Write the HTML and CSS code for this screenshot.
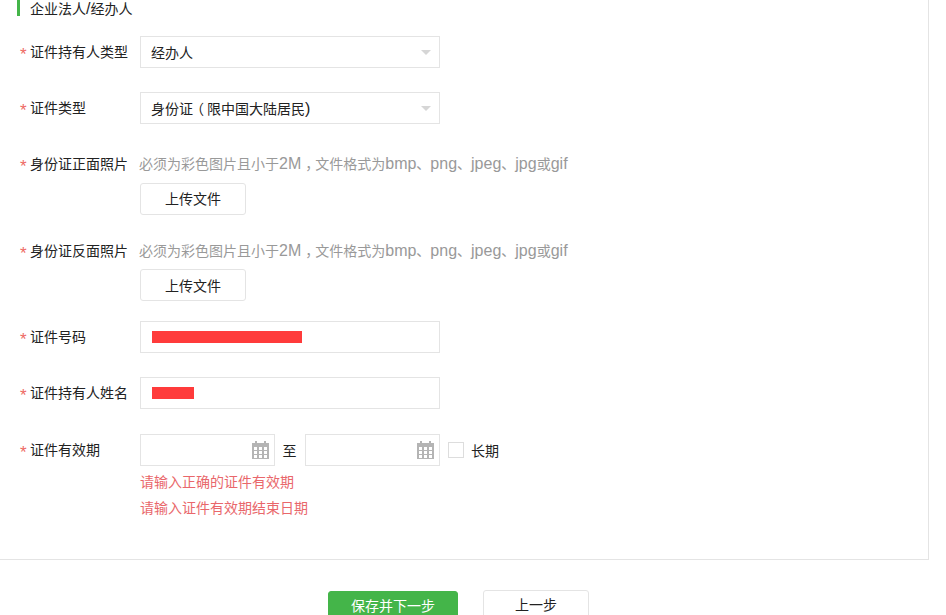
FILE: index.html
```html
<!DOCTYPE html>
<html lang="zh-CN">
<head>
<meta charset="utf-8">
<title>企业法人/经办人</title>
<link rel="stylesheet" href="styles.css">
</head>
<body>
<main class="panel">
  <h2 class="section-title">企业法人<span class="latin">/</span>经办人</h2>

  <div class="row row-first">
    <label class="label"><span class="star">*</span>证件持有人类型</label>
    <div class="field select"><span>经办人</span><i class="caret"></i></div>
  </div>

  <div class="row">
    <label class="label"><span class="star">*</span>证件类型</label>
    <div class="field select"><span>身份证<span class="fw-paren">（</span>限中国大陆居民<span class="latin">)</span></span><i class="caret"></i></div>
  </div>

  <div class="row">
    <label class="label"><span class="star">*</span>身份证正面照片</label>
    <div class="stack">
      <p class="hint">必须为彩色图片且小于<span class="latin">2M</span><span class="fw-comma">，</span>文件格式为<span class="latin">bmp</span>、<span class="latin">png</span>、<span class="latin">jpeg</span>、<span class="latin">jpg</span>或<span class="latin">gif</span></p>
      <button class="upload" type="button">上传文件</button>
    </div>
  </div>

  <div class="row row-tight">
    <label class="label"><span class="star">*</span>身份证反面照片</label>
    <div class="stack">
      <p class="hint">必须为彩色图片且小于<span class="latin">2M</span><span class="fw-comma">，</span>文件格式为<span class="latin">bmp</span>、<span class="latin">png</span>、<span class="latin">jpeg</span>、<span class="latin">jpg</span>或<span class="latin">gif</span></p>
      <button class="upload upload-tight" type="button">上传文件</button>
    </div>
  </div>

  <div class="row row-id">
    <label class="label"><span class="star">*</span>证件号码</label>
    <div class="field"><b class="redact redact-long"></b></div>
  </div>

  <div class="row">
    <label class="label"><span class="star">*</span>证件持有人姓名</label>
    <div class="field"><b class="redact redact-short"></b></div>
  </div>

  <div class="row row-date">
    <label class="label"><span class="star">*</span>证件有效期</label>
    <div class="stack">
      <div class="dates">
        <div class="field date">
          <svg class="cal" viewBox="0 0 17 18" aria-hidden="true"><path d="M0 2h3V0h2v2h7V0h2v2h3v16H0z" fill="#b4b4b4"/><path d="M2 6h3v3H2zM7 6h3v3H7zM12 6h3v3h-3zM2 10h3v3H2zM7 10h3v3H7zM12 10h3v3h-3zM2 14h3v3H2zM7 14h3v3H7zM12 14h3v3h-3z" fill="#fff"/></svg>
        </div>
        <span class="to">至</span>
        <div class="field date">
          <svg class="cal" viewBox="0 0 17 18" aria-hidden="true"><path d="M0 2h3V0h2v2h7V0h2v2h3v16H0z" fill="#b4b4b4"/><path d="M2 6h3v3H2zM7 6h3v3H7zM12 6h3v3h-3zM2 10h3v3H2zM7 10h3v3H7zM12 10h3v3h-3zM2 14h3v3H2zM7 14h3v3H7zM12 14h3v3h-3z" fill="#fff"/></svg>
        </div>
        <span class="check"></span>
        <span class="long">长期</span>
      </div>
      <p class="error error-first">请输入正确的证件有效期</p>
      <p class="error">请输入证件有效期结束日期</p>
    </div>
  </div>
</main>

<footer class="actions">
  <button class="btn btn-primary" type="button">保存并下一步</button>
  <button class="btn btn-plain" type="button">上一步</button>
</footer>
</body>
</html>
```
FILE: styles.css
```css
* { box-sizing: border-box; }
html, body { margin: 0; height: 100%; overflow: hidden; background: #fff; }
body {
  font-family: "Liberation Sans", "Noto Sans CJK SC", sans-serif;
  font-size: 14px;
  color: #222;
}
.panel {
  width: 929px;
  height: 560px;
  border-right: 1px solid #e4e4e4;
  border-bottom: 1px solid #e4e4e4;
}
.section-title {
  margin: 0 0 0 17px;
  height: 16px;
  padding-left: 10px;
  border-left: 3px solid #44b549;
  font-size: 14px;
  font-weight: 400;
  line-height: 18px;
  white-space: nowrap;
}
.row { display: flex; margin-top: 24px; }
.row-first { margin-top: 20px; }
.row-tight { margin-top: 20px; }
.row-id { margin-top: 20px; }
.row-date { margin-top: 25px; }
.label {
  width: 140px;
  height: 32px;
  flex: none;
  padding-left: 20px;
  line-height: 32px;
  white-space: nowrap;
  display: flex;
}
.star { width: 10px; height: 32px; flex: none; padding-top: 3px; color: #ee6a64; font-size: 17px; line-height: 32px; }
.latin { font-size: 16px; line-height: 1; }
.field {
  width: 300px;
  height: 32px;
  border: 1px solid #e4e4e4;
  background: #fff;
  display: flex;
  align-items: center;
  padding-left: 10px;
}
.select { justify-content: space-between; padding-right: 8px; }
.caret {
  width: 0;
  height: 0;
  border-left: 5px solid transparent;
  border-right: 5px solid transparent;
  border-top: 5px solid #d6d6d6;
}
.fw-paren { display: inline-block; padding: 0 3px 0 4px; font-feature-settings: "halt"; line-height: 1; }
.fw-comma { display: inline-block; padding: 0 3px 0 4px; font-feature-settings: "halt"; line-height: 1; }
.stack { display: flex; flex-direction: column; align-items: flex-start; }
.hint { margin: 0 0 0 -1px; height: 32px; line-height: 32px; color: #999; font-size: 14px; white-space: nowrap; }
.upload {
  width: 106px;
  height: 32px;
  margin-top: 3px;
  border: 1px solid #e4e4e4;
  border-radius: 3px;
  background: #fff;
  color: #222;
  font: inherit;
  padding: 0 0 2px;
}
.upload-tight { margin-top: 2px; padding: 0; }
.redact { display: block; height: 12px; background: #ff3b3b; margin-left: 1px; }
.redact-long { width: 150px; }
.redact-short { width: 42px; }
.dates { display: flex; align-items: center; }
.date { width: 135px; justify-content: flex-end; padding-right: 5px; }
.cal { width: 17px; height: 18px; }
.to { width: 30px; text-align: center; padding-right: 1px; }
.check { width: 16px; height: 16px; margin-left: 8px; border: 1px solid #ddd; }
.long { margin-left: 7px; }
.error { margin: 0; line-height: 26px; color: #e9676b; font-size: 14px; }
.error-first { margin-top: 3px; }
.actions { display: flex; margin: 30px 0 0 328px; gap: 25px; align-items: flex-start; }
.btn { height: 40px; border-radius: 3px; font: inherit; padding: 0 0 12px; }
.btn-primary { width: 130px; background: #44b549; border: 1px solid #44b549; color: #fff; margin-top: 1px; }
.btn-plain { width: 106px; background: #fff; border: 1px solid #e4e4e4; color: #222; }
```
